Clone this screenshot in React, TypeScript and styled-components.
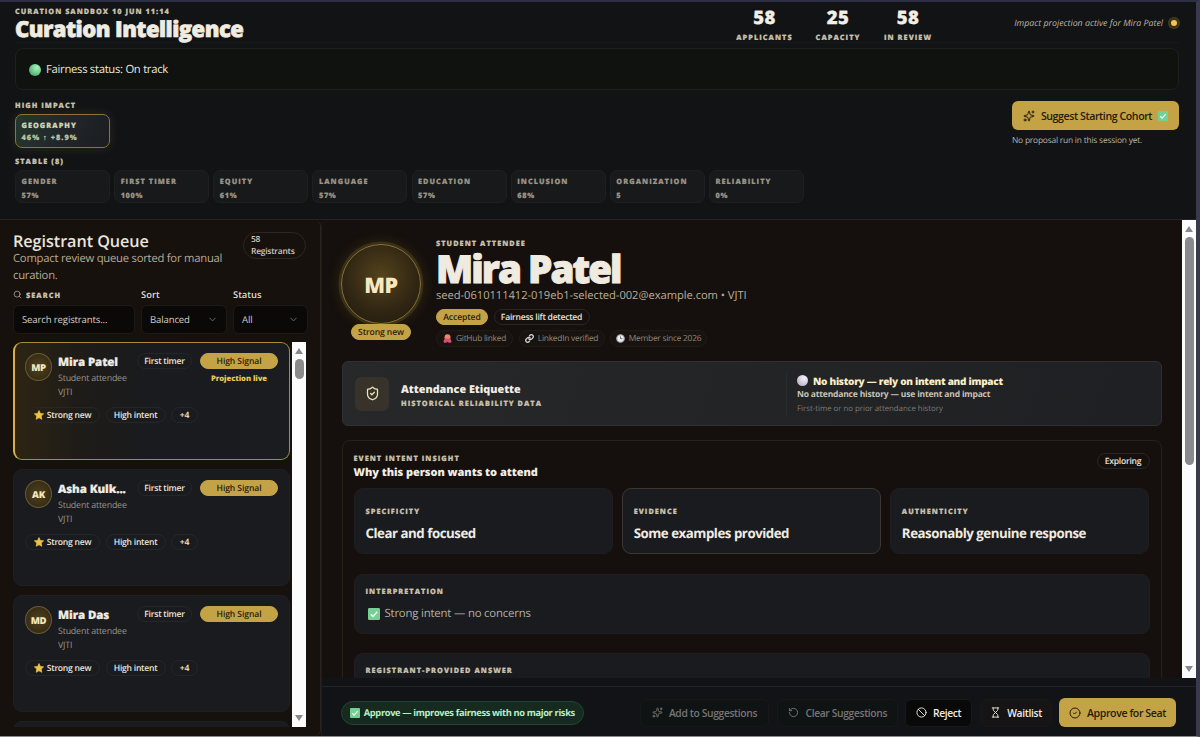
import React from "react";
import styled, { createGlobalStyle, css } from "styled-components";
import { Sparkles, Search, ChevronDown, ShieldCheck, RotateCcw, Ban, Hourglass, CircleCheck } from "lucide-react";

const Global = createGlobalStyle`
  * { box-sizing: border-box; }
  html, body, #root { height: 100%; }
  body { margin: 0; background: #111315; overflow: hidden; font-family: "Open Sans", "Noto Sans", sans-serif; color: #efebe2; text-rendering: geometricPrecision; }
  h1, h2, h3, p { margin: 0; font-weight: inherit; }
  button { font: inherit; border: 0; margin: 0; }
`;

const Window = styled.div`
  height: 737px; width: 1200px; display: flex; flex-direction: column;
  background: #111315; border-top: 2px solid #2d3045; border-right: 4px solid #393a4e; border-bottom: 1px solid #8a8a8c;
`;
const Header = styled.header`
  height: 218px; flex: none; padding: 0 17px 0 15px; display: flex; flex-direction: column; border-bottom: 1px solid #272320;
`;
const Eyebrow = styled.div<{ $ls?: number; $c?: string; $h?: number }>`
  font-size: 7.3px; font-weight: 800; letter-spacing: ${p => p.$ls ?? 1.05}px; line-height: ${p => p.$h ?? 10}px; padding-top: 1px; margin-bottom: -1px;
  color: ${p => p.$c ?? "#c9c1ae"}; -webkit-text-stroke: 0.2px ${p => p.$c ?? "#c9c1ae"}; white-space: nowrap; text-transform: uppercase;
`;
const TopRow = styled.div`height: 41px; display: flex; padding-top: 4px; border-bottom: 1px solid #16191a;`;
const Brand = styled.div`width: 713px;`;
const Title = styled.h1`
  font-size: 22px; font-weight: 800; letter-spacing: -0.53px; line-height: 26px; color: #f0ece2; -webkit-text-stroke: 0.7px #f0ece2; white-space: nowrap;
`;
const Stat = styled.div<{ $w: number }>`width: ${p => p.$w}px; display: flex; flex-direction: column; align-items: center;`;
const StatNumber = styled.div`font-size: 18.5px; font-weight: 800; line-height: 24px; height: 24px; color: #f3efe6; letter-spacing: 0.5px; -webkit-text-stroke: 0.3px #f3efe6;`;
const Projection = styled.div`
  margin-left: auto; display: flex; align-items: center; height: 33px; gap: 6px; font-size: 8.8px; font-style: italic; color: #bdb5a5; white-space: nowrap;
`;
const LiveDot = styled.i`width: 10px; height: 10px; border-radius: 50%; background: #f3c44e; border: 2px solid #3b3018; box-shadow: 0 0 0 1px #4b3d1c;`;
const StatusBox = styled.div`
  margin-top: 5px; height: 42px; border: 1px solid #1b2219; border-radius: 8px; background: #0f120e; display: flex; align-items: center; padding: 1px 0 0 13px; gap: 5px;
  font-size: 11.3px; letter-spacing: -0.3px; color: #e9e6de; white-space: nowrap;
`;
const HeaderBody = styled.div`display: flex; justify-content: space-between; padding-top: 10px;`;
const MetricGroup = styled.div<{ $top: number }>`display: flex; gap: 4.15px; margin-top: ${p => p.$top}px;`;
const StableLabel = styled(Eyebrow)`margin-top: 4px;`;
const Metric = styled.div<{ $hot?: boolean }>`
  width: 95px; height: 33px; border-radius: 7px; border: 1px solid #1d1f21; background: #17191b; padding: 5px 0 0 5.5px;
  display: flex; flex-direction: column; gap: 4px;
  ${p => p.$hot && css`
    height: 34px; gap: 2px; border-color: #8b733a; background: linear-gradient(115deg, #26382c, #22262a 50%, #1b1d20); box-shadow: 0 0 12px #d0a04026;
  `}
`;
const Cta = styled.div`width: 167px; padding-top: 1px; display: flex; flex-direction: column;`;
const GoldButton = styled.button<{ $w: number }>`
  width: ${p => p.$w}px; height: 29px; flex: none; border-radius: 6px; background: #c4a347; color: #241c0c; display: flex; align-items: center; justify-content: center;
  font-weight: 600; font-size: 10.6px; letter-spacing: -0.42px; gap: 6px; white-space: nowrap; padding: 0;
`;
const CtaNote = styled.p`font-size: 8.4px; line-height: 12px; margin-top: 5px; letter-spacing: -0.2px; color: #bdb5a6; white-space: nowrap;`;

const Main = styled.main`flex: 1; min-height: 0; display: flex; background: #120f0d;`;
const Queue = styled.aside`
  width: 321px; background: #17110e; border-right: 1px solid #2a221c; border-radius: 0 6px 6px 0; padding: 10px 0 0 13px; display: flex; flex-direction: column; overflow: hidden;
`;
const QueueTop = styled.div`display: flex; height: 57px;`;
const QueueTitle = styled.h2`font-size: 16.2px; font-weight: 600; line-height: 22px; letter-spacing: -0.05px; color: #e9e5dc; white-space: nowrap;`;
const QueueSub = styled.p`width: 230px; font-size: 11.3px; line-height: 17px; letter-spacing: -0.25px; color: #b5aa98; margin-top: -2px; white-space: nowrap;`;
const CountBadge = styled.div`
  width: 63px; height: 27px; border-radius: 14px; border: 1px solid #2c2722; font-size: 8.4px; font-weight: 600; line-height: 11.5px; letter-spacing: -0.2px; padding: 1px 0 0 7px; margin-top: 2px; color: #cfc9bd;
`;
const Filters = styled.div`display: flex; gap: 6px; height: 47px;`;
const Field = styled.div<{ $w: number }>`width: ${p => p.$w}px; display: flex; flex-direction: column; justify-content: space-between;`;
const FieldLabel = styled.div`display: flex; gap: 4px; align-items: center; height: 15px; font-size: 9.4px; font-weight: 600; color: #ddd8cd;`;
const Control = styled.div`
  height: 29px; border: 1px solid #1f1a16; border-radius: 6px; background: #0b0908; display: flex; align-items: center; justify-content: space-between; padding: 0 8px;
  font-size: 9.6px; letter-spacing: -0.15px; color: #d2ccc0; white-space: nowrap;
`;
const ListFrame = styled.div`display: flex; margin-top: 8px; height: 385px; gap: 2px;`;
const List = styled.div`width: 277px; overflow: hidden; display: flex; flex-direction: column; gap: 9px;`;
const Person = styled.article<{ $on?: boolean }>`
  flex: none; height: 117px; border-radius: 9px; background: #1a1b1e; border: 1px solid #1e2023; padding: 10px 11px 0 11px;
  ${p => p.$on && css`
    height: 118px; border-color: #a98a3a; border-left: 2px solid #d6b04a; padding-left: 10px;
    background: linear-gradient(90deg, #2d2412 0, #1f1c18 22%, #1a1b1e 45%, #1a1c20 100%);
  `}
`;
const PersonTop = styled.div`display: flex; height: 54px;`;
const Initials = styled.div`
  width: 27px; height: 28px; border-radius: 50%; border: 1px solid #6b5a33; background: radial-gradient(circle, #51421d, #2c2414); flex: none;
  display: flex; align-items: center; justify-content: center; font-weight: 800; font-size: 9.5px; letter-spacing: -0.3px; color: #f6e7bd;
`;
const PersonInfo = styled.div`width: 79px; margin-left: 6px; flex: none; white-space: nowrap;`;
const PersonName = styled.h3`font-size: 11.5px; font-weight: 800; line-height: 19px; height: 18px; letter-spacing: -0.1px; color: #f0ece3; -webkit-text-stroke: 0.2px #f0ece3;`;
const PersonMeta = styled.p`font-size: 8.9px; line-height: 14.4px; letter-spacing: -0.2px; color: #98948c;`;
const Pill = styled.span<{ $w: number; $gold?: boolean; $dim?: boolean }>`
  width: ${p => p.$w}px; height: 16px; border-radius: 8px; border: 1px solid #252628; display: inline-flex; align-items: center; justify-content: center; gap: 3px; flex: none;
  font-size: 8.6px; font-weight: 600; letter-spacing: -0.25px; color: #e9e5dc; white-space: nowrap;
  ${p => p.$gold && css`background: #c4a347; border-color: #c4a347; color: #2a200c; letter-spacing: -0.1px;`}
  ${p => p.$dim && css`height: 17px; border-color: #211a16; background: #19130f; color: #8f887d; font-weight: 400; font-size: 8.4px; gap: 4px;`}
`;
const SignalCol = styled.div`width: 78px; margin-left: 8px; display: flex; flex-direction: column; align-items: center; gap: 4px;`;
const Live = styled.div`font-size: 7.7px; line-height: 12px; font-weight: 800; letter-spacing: -0.08px; color: #e9c558; white-space: nowrap;`;
const Tags = styled.div`display: flex; gap: 5.5px;`;

const Track = styled.div`width: 14px; flex: none; background: #fcfcfc; display: flex; flex-direction: column; align-items: center; padding: 6px 0;`;
const Thumb = styled.div<{ $h: number }>`width: 9px; height: ${p => p.$h}px; border-radius: 5px; background: #8a8a8a; margin-top: 5px;`;
const Arrow = styled.i<{ $down?: boolean }>`
  width: 0; height: 0; border: 4px solid transparent; border-top-width: 0; border-bottom: 6px solid #8a8a8a;
  ${p => p.$down && css`margin-top: auto; border-top: 6px solid #8a8a8a; border-bottom-width: 0;`}
`;

const Detail = styled.section`flex: 1; min-width: 0; display: flex; flex-direction: column; background: #15100d; border-radius: 6px 0 0 0; border-left: 1px solid #211b17;`;
const ScrollArea = styled.div`height: 458px; flex: none; display: flex; overflow: hidden;`;
const Content = styled.div`flex: 1; padding: 18px 20px 0 20px; overflow: hidden; display: flex; flex-direction: column;`;
const Profile = styled.div`display: flex; height: 123px; flex: none;`;
const AvatarCol = styled.div`width: 78px; display: flex; flex-direction: column; align-items: center; padding-top: 6px;`;
const Avatar = styled.div`
  width: 80px; height: 80px; flex: none; border-radius: 50%; border: 1px solid #8d7535; box-shadow: 0 0 0 2.5px #3a2f17, 0 0 14px 3px #c49a3822;
  background: radial-gradient(circle at 50% 40%, #54431c, #2f2513 60%, #20190f); display: flex; align-items: center; justify-content: center;
  font-size: 21.5px; font-weight: 800; letter-spacing: -0.4px; color: #f8e8c0; padding-top: 2px;
`;
const ProfileInfo = styled.div`margin-left: 16px;`;
const ProfileName = styled.h2`font-size: 38.5px; line-height: 43px; height: 43px; font-weight: 800; letter-spacing: -1.95px; color: #efebe1; -webkit-text-stroke: 1px #efebe1; white-space: nowrap;`;
const Email = styled.p`font-size: 11.2px; line-height: 16px; height: 21px; letter-spacing: -0.05px; color: #b8ad9b; margin-top: -3px; white-space: nowrap;`;
const PillRow = styled.div`display: flex; gap: 5.5px; margin-bottom: 5px;`;
const Etiquette = styled.section`
  height: 65px; flex: none; border: 1px solid #2e3033; border-radius: 6px; background: linear-gradient(110deg, #272829, #222426 50%, #1e2023); display: flex; align-items: center; padding: 0 12px;
`;
const ShieldBox = styled.div`width: 34px; height: 34px; border-radius: 6px; background: #38332a; color: #f0e3bd; display: flex; align-items: center; justify-content: center;`;
const EtiquetteText = styled.div`width: 385px; margin-left: 12px; padding-top: 5px;`;
const Strong = styled.h3<{ $s: number; $ls: number; $h: number; $c?: string }>`
  font-size: ${p => p.$s}px; font-weight: 800; letter-spacing: ${p => p.$ls}px; line-height: ${p => p.$h}px; color: ${p => p.$c ?? "#f1ede4"}; white-space: nowrap; display: flex; align-items: center; gap: 5px;
`;
const Reliability = styled.div`border-left: 1px solid #2a2c30; height: 42px; padding: 1px 0 0 10px; display: flex; flex-direction: column; white-space: nowrap;`;
const RelLine = styled.p<{ $c: string; $w: number; $s: number; $ls: number }>`font-size: ${p => p.$s}px; font-weight: ${p => p.$w}; letter-spacing: ${p => p.$ls}px; line-height: 14.4px; color: ${p => p.$c};`;
const Intent = styled.section`margin-top: 14px; height: 300px; flex: none; border: 1px solid #29201a; border-radius: 8px; padding: 12px 11.5px 0 10.5px;`;
const IntentTop = styled.div`display: flex; justify-content: space-between; height: 35px;`;
const Insights = styled.div`display: grid; grid-template-columns: repeat(3, 1fr); gap: 8.5px;`;
const Insight = styled.div<{ $edge?: boolean }>`height: 66px; border-radius: 9px; background: #1a1b1e; border: 1px solid ${p => (p.$edge ? "#3c3732" : "#1e1d1f")}; padding: 17px 0 0 11px;`;
const InsightValue = styled.p`font-size: 13.3px; font-weight: 700; line-height: 20px; letter-spacing: -0.48px; color: #efebe2; margin-top: 6.5px; white-space: nowrap;`;
const Block = styled.div<{ $top: number }>`margin-top: ${p => p.$top}px; height: 60px; border-radius: 9px; background: #1a1b1e; border: 1px solid #231e1e; padding: 11px 0 0 11px;`;
const Answer = styled.p`font-size: 11.4px; line-height: 18px; letter-spacing: -0.2px; color: #b3aea4; margin-top: 9px; padding-left: 2px; display: flex; align-items: center; gap: 5px; white-space: nowrap;`;
const Footer = styled.footer`flex: 1; background: #111316; padding-top: 8px;`;
const FooterBar = styled.div`border-top: 1px solid #202428; height: 50px; display: flex; align-items: center; padding: 2px 20px 0 19px;`;
const Verdict = styled.div`
  width: 243px; height: 24px; border-radius: 12px; background: #172a20; border: 1px solid #234231; display: flex; align-items: center; justify-content: center; gap: 4px;
  font-size: 9.3px; font-weight: 700; letter-spacing: -0.36px; color: #b7efc6; white-space: nowrap; margin-right: 56px;
`;
const Action = styled.button<{ $w: number; $bg: string; $c: string; $m: number }>`
  width: ${p => p.$w}px; height: 28px; border-radius: 6px; background: ${p => p.$bg}; color: ${p => p.$c}; border: 1px solid #16181a; margin-right: ${p => p.$m}px; padding: 0;
  display: flex; align-items: center; justify-content: center; gap: 6px; font-size: 10.3px; font-weight: 600; letter-spacing: -0.36px; white-space: nowrap;
`;

const CheckMark = ({ size = 11 }: { size?: number }) => (
  <svg width={size} height={size} viewBox="0 0 12 12"><rect width="12" height="12" rx="1.3" fill="#76cf93" /><path d="M2.8 6.3 5 8.5 9.3 3.8" stroke="#effff2" strokeWidth="1.5" fill="none" /></svg>
);
const Ball = ({ id, size, a, b }: { id: string; size: number; a: string; b: string }) => (
  <svg width={size} height={size} viewBox="0 0 12 12"><defs><radialGradient id={id} cx="0.65" cy="0.3" r="0.8"><stop offset="0" stopColor={a} /><stop offset="1" stopColor={b} /></radialGradient></defs><circle cx="6" cy="6" r="6" fill={`url(#${id})`} /></svg>
);
const Star = () => (
  <svg width="10" height="10" viewBox="0 0 12 12"><path d="M6 .6 7.7 4.100l3.900.5-2.900 2.700.7 3.900L6 9.300l-3.400 1.900.7-3.900L.4 4.600l3.900-.5z" fill="#efc24a" stroke="#efc24a" strokeWidth=".8" strokeLinejoin="round" /></svg>
);
const Octopus = () => (
  <svg width="9" height="9" viewBox="0 0 12 12"><circle cx="6" cy="4.200" r="4" fill="#e88a6a" /><path d="M2.500 6h7l2 3.500-1 2h-3l-1.500-1.500L4.500 11.500h-3l-1-2z" fill="#dd4a78" /></svg>
);
const Link = () => (
  <svg width="9" height="9" viewBox="0 0 24 24" fill="none" stroke="#d5d3dc" strokeWidth="3.4" strokeLinecap="round"><path d="M10 13a5 5 0 0 0 7.540.540l3-3a5 5 0 0 0-7.070-7.070l-1.720 1.710" /><path d="M14 11a5 5 0 0 0-7.540-.540l-3 3a5 5 0 0 0 7.070 7.070l1.710-1.710" /></svg>
);
const Clock = () => (
  <svg width="9" height="9" viewBox="0 0 12 12"><circle cx="6" cy="6" r="5" fill="#efedf4" stroke="#a59fb2" strokeWidth="1.600" /><path d="M6 3.200V6.200h2.400" stroke="#555" strokeWidth="1.100" fill="none" /></svg>
);

const stats: [string, string, number][] = [["58", "Applicants", 73], ["25", "Capacity", 74], ["58", "In review", 66]];
const stable: [string, string][] = [["Gender", "57%"], ["First timer", "100%"], ["Equity", "61%"], ["Language", "57%"], ["Education", "57%"], ["Inclusion", "68%"], ["Organization", "5"], ["Reliability", "0%"]];
const people = [{ i: "MP", n: "Mira Patel", live: true }, { i: "AK", n: "Asha Kulk..." }, { i: "MD", n: "Mira Das" }];
const insights = [["Specificity", "Clear and focused"], ["Evidence", "Some examples provided"], ["Authenticity", "Reasonably genuine response"]];

export default function App() {
  return (
    <Window>
      <Global />
      <Header>
        <TopRow>
          <Brand><Eyebrow $ls={1}>Curation Sandbox 10 Jun 11:14</Eyebrow><Title>Curation Intelligence</Title></Brand>
          {stats.map(([n, l, w]) => (
            <Stat key={l} $w={w}><StatNumber>{n}</StatNumber><Eyebrow $h={14}>{l}</Eyebrow></Stat>
          ))}
          <Projection><span>Impact projection active for Mira Patel</span><LiveDot /></Projection>
        </TopRow>
        <StatusBox><Ball id="ok" size={12} a="#a5f5bd" b="#46a868" /><span>Fairness status: On track</span></StatusBox>
        <HeaderBody>
          <div>
            <Eyebrow>High impact</Eyebrow>
            <MetricGroup $top={4}><Metric $hot><Eyebrow $c="#cfd5bb">Geography</Eyebrow><Eyebrow $c="#b9c4a6">46% ↑ +8.9%</Eyebrow></Metric></MetricGroup>
            <StableLabel $h={18}>Stable (8)</StableLabel>
            <MetricGroup $top={0}>{stable.map(([a, b]) => <Metric key={a}><Eyebrow $c="#9b9486">{a}</Eyebrow><Eyebrow $c="#9b9486" $ls={0.7}>{b}</Eyebrow></Metric>)}</MetricGroup>
          </div>
          <Cta><GoldButton $w={167}><Sparkles size={12} /><span>Suggest Starting Cohort</span><CheckMark size={10} /></GoldButton><CtaNote>No proposal run in this session yet.</CtaNote></Cta>
        </HeaderBody>
      </Header>
      <Main>
        <Queue>
          <QueueTop>
            <div><QueueTitle>Registrant Queue</QueueTitle><QueueSub>Compact review queue sorted for manual<br />curation.</QueueSub></div>
            <CountBadge>58<br />Registrants</CountBadge>
          </QueueTop>
          <Filters>
            <Field $w={122}><FieldLabel><Search size={9} color="#b5aa98" /><Eyebrow>Search</Eyebrow></FieldLabel><Control>Search registrants...</Control></Field>
            <Field $w={86}><FieldLabel>Sort</FieldLabel><Control>Balanced<ChevronDown size={11} color="#77726a" /></Control></Field>
            <Field $w={75}><FieldLabel>Status</FieldLabel><Control>All<ChevronDown size={11} color="#77726a" /></Control></Field>
          </Filters>
          <ListFrame>
            <List>
              {people.map(p => (
                <Person key={p.i} $on={p.live}>
                  <PersonTop>
                    <Initials>{p.i}</Initials>
                    <PersonInfo><PersonName>{p.n}</PersonName><PersonMeta>Student attendee</PersonMeta><PersonMeta>VJTI</PersonMeta></PersonInfo>
                    <Pill $w={55}>First timer</Pill>
                    <SignalCol><Pill $w={78} $gold>High Signal</Pill>{p.live && <Live>Projection live</Live>}</SignalCol>
                  </PersonTop>
                  <Tags><Pill $w={75}><Star />Strong new</Pill><Pill $w={60}>High intent</Pill><Pill $w={27}>+4</Pill></Tags>
                </Person>
              ))}
              <Person />
            </List>
            <Track><Arrow /><Thumb $h={20} /><Arrow $down /></Track>
          </ListFrame>
        </Queue>
        <Detail>
          <ScrollArea>
            <Content>
              <Profile>
                <AvatarCol><Avatar>MP</Avatar><Pill $w={60} $gold>Strong new</Pill></AvatarCol>
                <ProfileInfo>
                  <Eyebrow>Student attendee</Eyebrow>
                  <ProfileName>Mira Patel</ProfileName>
                  <Email>seed-0610111412-019eb1-selected-002@example.com • VJTI</Email>
                  <PillRow><Pill $w={52} $gold>Accepted</Pill><Pill $w={96}>Fairness lift detected</Pill></PillRow>
                  <PillRow><Pill $w={77} $dim><Octopus />GitHub linked</Pill><Pill $w={86} $dim><Link />LinkedIn verified</Pill><Pill $w={97} $dim><Clock />Member since 2026</Pill></PillRow>
                </ProfileInfo>
              </Profile>
              <Etiquette>
                <ShieldBox><ShieldCheck size={15} /></ShieldBox>
                <EtiquetteText><Strong $s={10.8} $ls={0} $h={14}>Attendance Etiquette</Strong><Eyebrow $h={12}>Historical reliability data</Eyebrow></EtiquetteText>
                <Reliability>
                  <Strong $s={10} $ls={-0.28} $h={14} $c="#fbeec6"><Ball id="none" size={11} a="#f4f0fa" b="#b9b0c8" />No history — rely on intent and impact</Strong>
                  <RelLine $c="#c9c3b7" $w={700} $s={8.5} $ls={-0.18}>No attendance history — use intent and impact</RelLine>
                  <RelLine $c="#7f7c76" $w={500} $s={7.8} $ls={0}>First-time or no prior attendance history</RelLine>
                </Reliability>
              </Etiquette>
              <Intent>
                <IntentTop><div><Eyebrow>Event intent insight</Eyebrow><Strong $s={11} $ls={-0.05} $h={19}>Why this person wants to attend</Strong></div><Pill $w={53}>Exploring</Pill></IntentTop>
                <Insights>{insights.map(([a, b], k) => <Insight key={a} $edge={k === 1}><Eyebrow>{a}</Eyebrow><InsightValue>{b}</InsightValue></Insight>)}</Insights>
                <Block $top={19.5}><Eyebrow>Interpretation</Eyebrow><Answer><CheckMark size={12} />Strong intent — no concerns</Answer></Block>
                <Block $top={19.5}><Eyebrow>Registrant-provided answer</Eyebrow></Block>
              </Intent>
            </Content>
            <Track><Arrow /><Thumb $h={228} /><Arrow $down /></Track>
          </ScrollArea>
          <Footer>
            <FooterBar>
              <Verdict><CheckMark size={10} /><span>Approve — improves fairness with no major risks</span></Verdict>
              <Action $w={130} $bg="#101314" $c="#777572" $m={8}><Sparkles size={11} />Add to Suggestions</Action>
              <Action $w={121} $bg="#101314" $c="#777572" $m={7}><RotateCcw size={11} />Clear Suggestions</Action>
              <Action $w={67} $bg="#0a0909" $c="#efebe2" $m={8}><Ban size={11} />Reject</Action>
              <Action $w={72} $bg="#171415" $c="#efebe2" $m={7}><Hourglass size={11} />Waitlist</Action>
              <GoldButton $w={117}><CircleCheck size={12} />Approve for Seat</GoldButton>
            </FooterBar>
          </Footer>
        </Detail>
      </Main>
    </Window>
  );
}
